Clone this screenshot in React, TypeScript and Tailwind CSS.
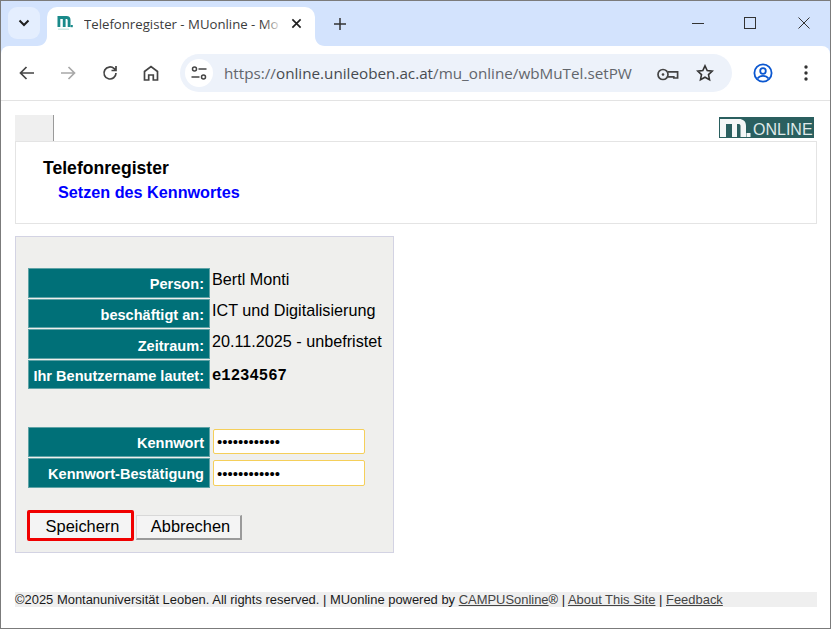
import React from "react";

const sans = "font-['Liberation_Sans',Arial,sans-serif]";
const chrome = "font-['Open_Sans','Noto_Sans',sans-serif]";

function Label({ children, h, pb }: { children: React.ReactNode; h: string; pb: string }) {
  return (
    <div className={`w-[182px] ${h} ${pb} bg-[#007078] border border-[#5fa3a6] flex items-end justify-end pr-[5px] text-white font-bold text-[14.55px] leading-[16px] whitespace-nowrap`}>
      {children}
    </div>
  );
}

function InfoRow({ label, value, h, pt, pb, bold }: { label: string; value: string; h: string; pt: string; pb: string; bold?: boolean }) {
  return (
    <div className="flex">
      <Label h={h} pb={pb}>{label}</Label>
      <div className={bold ? `pl-[2px] ${pt} font-['Liberation_Mono',monospace] font-bold text-[15.6px] leading-[18px] text-black` : `pl-[2px] ${pt} text-[16.2px] leading-[19px] text-black`}>
        {value}
      </div>
    </div>
  );
}

function PwRow({ label, h, inputH }: { label: string; h: string; inputH: string }) {
  return (
    <div className="flex">
      <Label h={h} pb="pb-[5px]">{label}</Label>
      <div className={`ml-[3px] mt-[2px] w-[152px] ${inputH} bg-white border border-[#f5cf5a] rounded-[2px] flex items-center pl-[3px] text-[15px] leading-none text-black`}>
        ••••••••••••
      </div>
    </div>
  );
}

export default function App() {
  return (
    <div className="w-[831px] h-[629px] overflow-hidden bg-white border border-[#7b7b7b] box-border flex flex-col">
      {/* title / tab strip */}
      <div className={`h-[45px] shrink-0 bg-[#d3e3fd] flex pt-[6px] pl-[7px] ${chrome}`}>
        <div className="w-[32px] h-[32px] rounded-[9px] bg-[#e4eefe] flex items-center justify-center">
          <svg width="12" height="8" viewBox="0 0 12 8" fill="none" stroke="#1f1f1f" strokeWidth="2"><path d="M1.5 1.5 6 6l4.5-4.5" /></svg>
        </div>
        <div className="ml-[7px] w-[268px] h-[39px] bg-white rounded-t-[10px] flex items-center pl-[10px] relative">
          <svg width="10" height="10" viewBox="0 0 10 10" className="absolute -left-[10px] bottom-0" fill="#ffffff"><path d="M10 0C10 6 6 10 0 10h10z" /></svg>
          <svg width="10" height="10" viewBox="0 0 10 10" className="absolute -right-[10px] bottom-0" fill="#ffffff"><path d="M0 0C0 6 4 10 10 10H0z" /></svg>
          <svg width="16" height="20" viewBox="0 0 16 20" className="shrink-0 -mt-[3px]">
            <path d="M.5 1H9.5c2.800 0 4 1.500 4 4v7h-2.800V5.500c0-1-.5-1.500-1.300-1.500H8.600v8H5.800V4H3.300v8H.5z" fill="#1a8a8a" />
            <rect x="13.600" y="10" width="2.200" height="2.200" fill="#1a8a8a" />
            <rect x="1" y="13.500" width="11" height="1.500" fill="#cfe8e4" />
          </svg>
          <div className="ml-[11px] w-[198px] overflow-hidden whitespace-nowrap text-[13.2px] leading-[18px] text-[#3c3c3c] -mt-[5px] relative">
            Telefonregister - MUonline - Mo
            <div className="absolute right-0 top-0 h-full w-[18px] bg-linear-to-r from-transparent to-white" />
          </div>
          <svg width="11" height="11" viewBox="0 0 12 12" className="absolute left-[244px] top-[11px]" stroke="#1f1f1f" strokeWidth="1.8"><path d="M1.5 1.500l9 9M10.500 1.500l-9 9" /></svg>
        </div>
        <svg width="14" height="14" viewBox="0 0 14 14" className="ml-[18px] mt-[10px]" stroke="#333" strokeWidth="1.5"><path d="M7 1v12M1 7h12" /></svg>
        <div className="ml-auto flex">
          <svg width="12" height="12" viewBox="0 0 12 12" className="mt-[10px] mr-[40px]" stroke="#333" strokeWidth="1"><path d="M0 6.500h12" /></svg>
          <svg width="12" height="12" viewBox="0 0 12 12" className="mt-[10px] mr-[42px]" stroke="#333" strokeWidth="1" fill="none"><rect x="0.500" y="0.500" width="11" height="11" /></svg>
          <svg width="12" height="12" viewBox="0 0 12 12" className="mt-[10px] mr-[20px]" stroke="#333" strokeWidth="1"><path d="M.5.5l11 11M11.500.5l-11 11" /></svg>
        </div>
      </div>

      {/* toolbar */}
      <div className={`h-[55px] shrink-0 bg-[#d3e3fd] ${chrome}`}>
        <div className="h-full bg-white rounded-t-[8px] border-b border-[#e3e3e3] flex items-center pb-[1px] relative">
          <svg width="18" height="18" viewBox="0 0 18 18" className="ml-[17px]" fill="none" stroke="#444" strokeWidth="1.7"><path d="M16 9H2.500M8.500 3 2.500 9l6 6" /></svg>
          <svg width="18" height="18" viewBox="0 0 18 18" className="ml-[23px]" fill="none" stroke="#a8a8a8" strokeWidth="1.7"><path d="M2 9h13.500M9.500 3l6 6-6 6" /></svg>
          <svg width="18" height="18" viewBox="0 0 18 18" className="ml-[24px]" fill="none" stroke="#444" strokeWidth="1.7"><path d="M15 9a6 6 0 1 1-1.800-4.300L15 6.500M15 2v4.500h-4.500" /></svg>
          <svg width="18" height="18" viewBox="0 0 18 18" className="ml-[23px]" fill="none" stroke="#444" strokeWidth="1.7"><path d="M2.500 16V7.500L9 2.500l6.500 5V16h-4.200v-5H6.700v5z" /></svg>
          <div className="ml-[20px] w-[552px] h-[38px] rounded-[19px] bg-[#edf2fa] flex items-center pl-[5px] relative">
            <div className="w-[28px] h-[28px] rounded-full bg-white flex items-center justify-center shrink-0">
              <svg width="16" height="14" viewBox="0 0 16 14" fill="none" stroke="#444" strokeWidth="1.5">
                <circle cx="3.500" cy="3" r="2" /><path d="M7.500 3h8M.5 11h8" /><circle cx="12.500" cy="11" r="2" />
              </svg>
            </div>
            <div className="ml-[11px] text-[15.24px] leading-[20px] whitespace-nowrap text-[#62666c]">
              https://<span className="text-[#474b50]">online.unileoben.ac.at</span>/mu_online/wbMuTel.setPW
            </div>
            <svg width="22" height="13" viewBox="0 0 22 13" className="absolute left-[477px] top-[14px]" fill="none" stroke="#444" strokeWidth="1.7">
              <circle cx="6" cy="6.500" r="5" /><circle cx="6" cy="6.500" r="1.300" fill="#444" stroke="none" />
              <path d="M11 3.800H20.600V10H16.800V8.800H11" />
            </svg>
            <svg width="18" height="18" viewBox="0 0 18 18" className="absolute left-[516px] top-[10px]" fill="none" stroke="#333" strokeWidth="1.6"><path d="M9 1.800l2.200 4.700 5.100.6-3.800 3.500 1 5.100L9 13.200l-4.500 2.500 1-5.100L1.700 7.100l5.100-.6z" /></svg>
          </div>
          <svg width="20" height="20" viewBox="0 0 20 20" className="ml-[21px]" fill="none" stroke="#0b57d0" strokeWidth="1.8">
            <circle cx="10" cy="10" r="8.600" /><circle cx="10" cy="8" r="2.800" /><path d="M4.500 15.500c1.500-2 3.500-2.600 5.500-2.600s4 .6 5.500 2.600" />
          </svg>
          <svg width="4" height="16" viewBox="0 0 4 16" className="ml-[31px]" fill="#333"><circle cx="2" cy="2" r="1.700" /><circle cx="2" cy="8" r="1.700" /><circle cx="2" cy="14" r="1.700" /></svg>
        </div>
      </div>

      {/* page */}
      <div className={`flex-1 px-[14px] pt-[14px] ${sans} text-black relative`}>
        <div className="flex justify-between h-[27px]">
          <div className="w-[39px] h-[26px] bg-[#efefef] border-r border-[#9a9a9a]" />
          <div className="mr-[2px] mt-[2px] w-[95px] h-[21px] bg-[#2a5f5f] flex items-end overflow-hidden">
            <svg width="33" height="21" viewBox="0 0 33 21" className="shrink-0">
              <path d="M1 20V2H20c4 0 7 2 7 7v11h-5.500V9c0-1.500-1-2-2-2H18v13h-5V7H7v13z" fill="#f4f7f7" />
              <rect x="27.500" y="16" width="4" height="4" fill="#f4f7f7" />
            </svg>
            <span className="text-[#dfe9e9] text-[16px] leading-[17px] ml-[1px]">ONLINE</span>
          </div>
        </div>
        <div className="h-[83px] border border-[#e4e4e4] w-[802px] -mt-[1px] pl-[27px] pt-[16px] font-bold">
          <div className="text-[17.6px] leading-[20px] text-black">Telefonregister</div>
          <div className="ml-[15px] mt-[4px] text-[16.2px] leading-[20px] text-[#0000ff]">Setzen des Kennwortes</div>
        </div>

        <div className="mt-[12px] w-[379px] h-[317px] bg-[#efefed] border border-[#d3d3e3] pl-[12px] pt-[31px]">
          <div className="flex flex-col gap-[1px]">
            <InfoRow label="Person:" value="Bertl Monti" h="h-[29.5px]" pt="pt-[2px]" pb="pb-[5px]" />
            <InfoRow label="beschäftigt an:" value="ICT und Digitalisierung" h="h-[29.5px]" pt="pt-[2.5px]" pb="pb-[4px]" />
            <InfoRow label="Zeitraum:" value="20.11.2025 - unbefristet" h="h-[30px]" pt="pt-[3px]" pb="pb-[4px]" />
            <InfoRow label="Ihr Benutzername lautet:" value="e1234567" h="h-[29px]" pt="pt-[7px]" pb="pb-[4px]" bold />
          </div>
          <div className="mt-[38px] flex flex-col gap-[1px]">
            <PwRow label="Kennwort" h="h-[30px]" inputH="h-[25px]" />
            <PwRow label="Kennwort-Bestätigung" h="h-[30px]" inputH="h-[26px]" />
          </div>
          <div className="mt-[22px] flex items-start -ml-[1px]">
            <div className="w-[107px] h-[31px] border-[3px] border-[#f00000] rounded-[2px] bg-[#f4f4f4] flex items-center justify-center text-[16.4px] leading-[19px] pl-[4px] pt-[1px]">
              Speichern
            </div>
            <div className="ml-[2px] mt-[5px] w-[106px] h-[25px] bg-[#f4f4f4] border border-[#d8d8d8] border-r-[#9a9a9a] border-b-[#9a9a9a] border-r-2 border-b-2 flex items-center justify-center text-[16.4px] leading-[19px] pl-[4px] pb-[1px]">
              Abbrechen
            </div>
          </div>
        </div>

        <div className="mt-[39px] w-[802px] h-[15px] bg-[#efefef] text-[12.95px] leading-[15px] whitespace-nowrap text-[#1a1a1a]">
          ©2025 Montanuniversität Leoben. All rights reserved. | MUonline powered by <span className="underline text-[#444]">CAMPUSonline</span>® | <span className="underline text-[#444]">About This Site</span> | <span className="underline text-[#444]">Feedback</span>
        </div>
      </div>
    </div>
  );
}
